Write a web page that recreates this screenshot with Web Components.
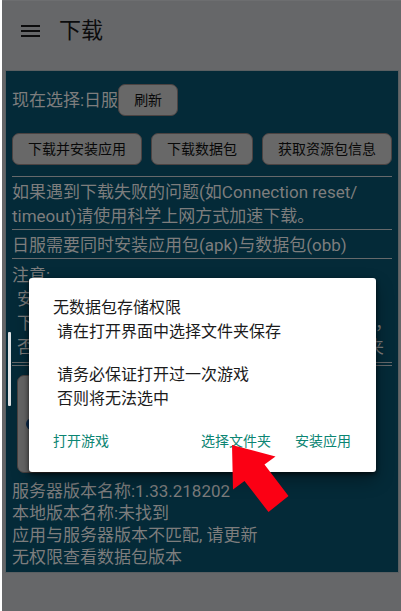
<!DOCTYPE html>
<html lang="zh-CN">
<head>
<meta charset="UTF-8">
<meta name="viewport" content="width=device-width, initial-scale=1">
<title>下载</title>
<style>
  html { background: #666769; }
  body {
    margin: 0;
    min-height: 100vh;
    box-sizing: border-box;
    border-left: 2px solid #fff;
    position: relative;
    font-family: Roboto, "Noto Sans CJK SC", sans-serif;
    --teal: #042a38;
    --muted: #7d7d7d;
    --accent: #0c8573;
  }
</style>
</head>
<body>
<app-header>下载</app-header>

<download-panel>
  <span slot="server">现在选择:日服</span>
  <pill-button slot="server">刷新</pill-button>

  <pill-button slot="actions">下载并安装应用</pill-button>
  <pill-button slot="actions">下载数据包</pill-button>
  <pill-button slot="actions">获取资源包信息</pill-button>

  <note-block>如果遇到下载失败的问题(如Connection reset/<br>timeout)请使用科学上网方式加速下载。</note-block>
  <note-block>日服需要同时安装应用包(apk)与数据包(obb)</note-block>
  <notice-list></notice-list>
  <resource-card></resource-card>

  <div slot="status">服务器版本名称:1.33.218202</div>
  <div slot="status">本地版本名称:未找到</div>
  <div slot="status">应用与服务器版本不匹配, 请更新</div>
  <div slot="status">无权限查看数据包版本</div>
</download-panel>

<permission-dialog>
  <span slot="title">无数据包存储权限</span>
  <p-lines>请在打开界面中选择文件夹保存</p-lines>
  <p-lines>请务必保证打开过一次游戏<br>否则将无法选中</p-lines>
  <text-button slot="left">打开游戏</text-button>
  <text-button slot="right">选择文件夹</text-button>
  <text-button slot="right">安装应用</text-button>
</permission-dialog>

<red-arrow></red-arrow>

<script>
// Small helper, every element gets an open shadow root:
function define(name, html) {
  customElements.define(name, class extends HTMLElement {
    constructor() {
      super();
      this.attachShadow({ mode: 'open' }).innerHTML = html;
    }
  });
}

// Top bar with the menu icon:
define('app-header', `
  <style>
    :host { display: flex; align-items: center; gap: 17px; height: 71px; box-sizing: border-box;
      padding: 0 18px 10px; border-top: 1px solid #6d6e70; color: #0c0c0d; }
    button { display: block; border: 0; padding: 0; background: none; color: inherit; }
    svg { display: block; }
    h1 { margin: 0; font-size: 22px; line-height: 32px; font-weight: 400; }
  </style>
  <button aria-label="菜单">
    <svg width="22" height="14" viewBox="0 0 22 14" fill="currentColor">
      <path d="M1 1h19v2H1zM1 6h19v2H1zM1 11h19v2H1z"/>
    </svg>
  </button>
  <h1><slot></slot></h1>
`);

// Rounded grey button:
define('pill-button', `
  <style>
    :host { display: block; }
    button { display: block; height: 32px; padding: 0 15px; font: inherit; font-size: 14px; line-height: 20px;
      color: #080808; background: #686868; border: 1px solid #4b4342; border-radius: 7px; white-space: nowrap; }
  </style>
  <button><slot></slot></button>
`);

// Main teal panel:
define('download-panel', `
  <style>
    :host { display: block; margin: 0 3px 0 4px; padding: 13px 6px 4px; background: var(--teal);
      color: var(--muted); font-size: 17px; line-height: 24px; box-shadow: 0 0 0 1px #5a5f62; }
    .server { display: flex; align-items: center; height: 32px; }
    .actions { display: flex; justify-content: space-between; margin: 17px 0 11px; }
    .status { line-height: 22px; padding-top: 7px; }
  </style>
  <div class="server"><slot name="server"></slot></div>
  <div class="actions"><slot name="actions"></slot></div>
  <slot></slot>
  <div class="status"><slot name="status"></slot></div>
`);

// Text under a thin rule:
define('note-block', `
  <style>
    :host { display: block; border-top: 1px solid #66696b; padding: 3px 0 1px; white-space: nowrap; }
  </style>
  <slot></slot>
`);

// Notice lines, mostly covered by the dialog:
define('notice-list', `
  <style>
    :host { display: block; border: solid #66696b; border-width: 1px 0; padding: 4px 0 3px; }
    .line { display: flex; justify-content: space-between; padding: 0 8px 0 5px; }
    .line.full { padding-right: 0; }
  </style>
  <div>注意:</div>
  <div class="line">安</div>
  <div class="line full"><span>下</span><span>，</span></div>
  <div class="line"><span>否</span><span>夹</span></div>
`);

define('resource-card', `
  <style>
    :host { display: block; border-top: 1px solid #66696b; margin-top: 2px; padding: 9px 5px 0; }
    .card { display: flex; align-items: center; box-sizing: border-box; width: 40%; height: 98px; padding-left: 8px;
      background: #686868; border: 1px solid #4b4342; border-radius: 7px; }
    .dot { width: 12px; height: 12px; border-radius: 50%; background: #0a2a4c; }
  </style>
  <div class="card"><div class="dot"></div></div>
`);

// Permission dialog:
define('permission-dialog', `
  <style>
    :host { display: block; position: absolute; left: 27px; right: 25px; top: 278px; box-sizing: border-box;
      padding: 18px 25px 21px 24px; background: #fff; color: #1b1b1b; border-radius: 3px;
      font-size: 16px; line-height: 24px; box-shadow: 0 2px 4px #000a, 0 8px 18px #0005; }
    h2 { margin: 0; font: inherit; }
    .body { display: flex; flex-direction: column; gap: 19px; padding-left: 4px; }
    .buttons { display: flex; gap: 24px; margin-top: 20px; }
    .space { flex: 1; }
  </style>
  <div role="dialog" aria-labelledby="title">
    <h2 id="title"><slot name="title"></slot></h2>
    <div class="body"><slot></slot></div>
    <div class="buttons"><slot name="left"></slot><span class="space"></span><slot name="right"></slot></div>
  </div>
`);

define('p-lines', `
  <style>
    :host { display: block; }
    p { margin: 0; }
  </style>
  <p><slot></slot></p>
`);

define('text-button', `
  <style>
    :host { display: block; }
    button { display: block; border: 0; padding: 0; background: none; font: inherit; font-size: 14px;
      line-height: 20px; color: var(--accent); }
  </style>
  <button><slot></slot></button>
`);

// Arrow pointing at the folder button:
define('red-arrow', `
  <style>
    :host { display: block; position: absolute; left: 230px; top: 445px; pointer-events: none; }
    svg { display: block; }
  </style>
  <svg width="57" height="68" viewBox="0 0 57 68">
    <path fill="#fb0014" d="M0 0L43.500 11.500L32.500 19.500L56.500 51L36.500 67L12.500 36L1 44.500Z"/>
  </svg>
`);

// Scroll indicator at the left edge:
define('scroll-thumb', `
  <style>
    :host { display: block; position: absolute; left: 6px; top: 332px; width: 3px; height: 74px;
      background: #dfe3e5; border-radius: 1px; }
  </style>
`);
document.body.append(document.createElement('scroll-thumb'));
</script>
</body>
</html>
